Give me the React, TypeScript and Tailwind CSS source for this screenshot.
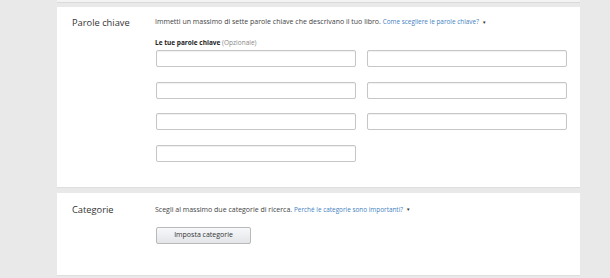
import React from "react";

const Caret = () => (
  <span className="ml-[3px] inline-block align-middle text-[4.5px] text-[#333] leading-none">▼</span>
);

const KeywordInput = () => (
  <input
    type="text"
    className="h-[17px] w-[200px] rounded-[2px] border border-[#c6c6c6] bg-white shadow-[inset_0_1px_1px_rgba(0,0,0,0.06)] outline-none"
  />
);

const App = () => {
  return (
    <div className="h-[278px] w-[610px] overflow-hidden bg-[#e9e9e9] font-['Open_Sans',sans-serif] text-[#333]">
      <div className="ml-[57px] w-[523px]">
        <div className="h-[3px] border-b border-[#dadada] bg-[#f3f3f3]" />

        <section className="mt-[4px] flex bg-white pb-[25px] pt-[9px] border-b border-[#dedede]">
          <h3 className="w-[98px] pl-[15px] text-[9.3px] leading-[14px] text-[#333]">Parole chiave</h3>
          <div>
            <p className="text-[7px] leading-[12px] text-[#444]">
              Immetti un massimo di sette parole chiave che descrivano il tuo libro.{" "}
              <span className="text-[6.4px] text-[#3f7fbf]">Come scegliere le parole chiave?</span>
              <Caret />
            </p>
            <p className="mt-[10px] text-[6.5px] leading-[10px] font-bold text-[#222]">
              Le tue parole chiave <span className="font-normal text-[#888]">(Opzionale)</span>
            </p>
            <div className="mt-[2px] grid grid-cols-[200px_200px] gap-x-[11px] gap-y-[14.5px] pl-px">
              <KeywordInput />
              <KeywordInput />
              <KeywordInput />
              <KeywordInput />
              <KeywordInput />
              <KeywordInput />
              <KeywordInput />
            </div>
          </div>
        </section>

        <section className="mt-[5px] flex bg-white pb-[31px] pt-[10px] border-b border-[#dedede]">
          <h3 className="w-[98px] pl-[15px] text-[9.3px] leading-[14px] text-[#333]">Categorie</h3>
          <div>
            <p className="mt-[1px] text-[7px] leading-[12px] text-[#444]">
              Scegli al massimo due categorie di ricerca.{" "}
              <span className="text-[6.4px] text-[#3f7fbf]">Perché le categorie sono importanti?</span>
              <Caret />
            </p>
            <button className="ml-px mt-[11px] h-[17px] w-[95px] rounded-[2px] border border-[#b9b9b9] bg-gradient-to-b from-[#f7f8fa] to-[#e4e5e8] text-[7px] text-[#333]">
              Imposta categorie
            </button>
          </div>
        </section>
      </div>
    </div>
  );
};

export default App;
